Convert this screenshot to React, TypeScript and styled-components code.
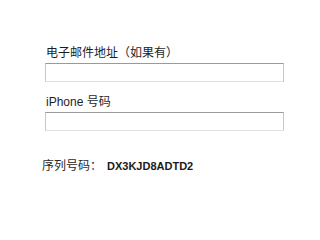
import React from "react";
import styled, { createGlobalStyle } from "styled-components";

const Global = createGlobalStyle`
  html, body { margin: 0; padding: 0; background: #ffffff; }
  body { font-family: "Liberation Sans", "Noto Sans CJK SC", sans-serif; color: #1e1e1e; }
`;

const Page = styled.div`
  width: 301px;
  height: 216px;
  box-sizing: border-box;
  padding: 45px 0 0 45px;
  display: flex;
  flex-direction: column;
`;

const Field = styled.div<{ $gap?: number }>`
  display: flex;
  flex-direction: column;
  margin-bottom: ${(p) => p.$gap ?? 0}px;
`;

const Label = styled.label`
  font-size: 12px;
  line-height: 16px;
  margin: 0 0 2px 1px;
`;

const Input = styled.input`
  width: 239px;
  height: 19px;
  box-sizing: border-box;
  margin: 0;
  padding: 0 3px;
  border: 1px solid;
  border-color: #9a9a9a #c8c8c8 #e2e2e2 #c8c8c8;
  background: #ffffff;
  outline: none;
`;

const SerialRow = styled.div`
  display: flex;
  align-items: center;
  margin: 27px 0 0 -3px;
  font-size: 12px;
  line-height: 16px;
`;

const SerialLabel = styled.span`
  width: 65px;
  color: #2a2a2a;
`;

const SerialValue = styled.span`
  font-weight: bold;
  font-size: 11px;
  color: #1a1a1a;
`;

export default function App() {
  return (
    <>
      <Global />
      <Page>
        <Field $gap={12}>
          <Label>电子邮件地址（如果有）</Label>
          <Input type="text" />
        </Field>
        <Field>
          <Label>iPhone 号码</Label>
          <Input type="text" />
        </Field>
        <SerialRow>
          <SerialLabel>序列号码：</SerialLabel>
          <SerialValue>DX3KJD8ADTD2</SerialValue>
        </SerialRow>
      </Page>
    </>
  );
}
